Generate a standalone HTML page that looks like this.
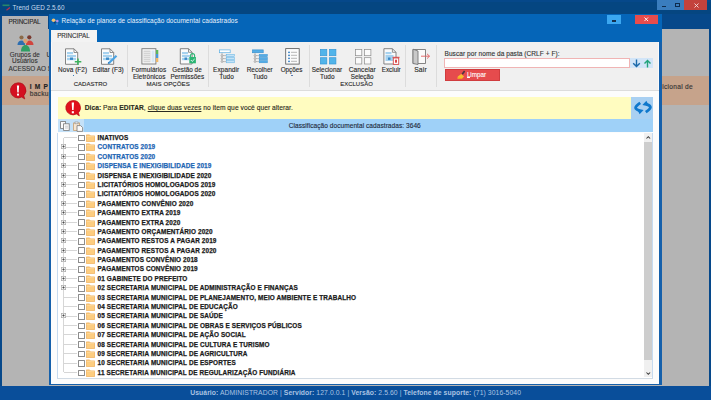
<!DOCTYPE html>
<html><head><meta charset="utf-8">
<style>
*{box-sizing:border-box;margin:0;padding:0}
html,body{width:711px;height:400px;overflow:hidden}
body{position:relative;background:#06498b;font-family:"Liberation Sans",sans-serif;font-size:6px;color:#333}
.a{position:absolute;white-space:nowrap}
svg.a{overflow:visible}
.t{position:absolute;white-space:nowrap;line-height:8px;-webkit-text-stroke:0.12px currentColor}
.hl{position:absolute;left:64px;width:13px;height:1px;background:#d6d6d6}
.pb{position:absolute;left:61px}
.cb{position:absolute;left:78px;width:6.8px;height:6.6px;border:1px solid #8c8c8c;border-radius:0.6px;background:#fff}
.fd{position:absolute;left:86.3px}
.tt{position:absolute;left:97.6px;height:9.388px;line-height:9.388px;font-size:6.4px;letter-spacing:0.13px;-webkit-text-stroke:0.25px currentColor;font-weight:bold;white-space:nowrap;color:#1c1c1c}
.tt.b{color:#1e66b4}
</style></head><body>
<div class="a" style="left:0;top:0;width:711px;height:400px;background:#06488a"></div>
<div class="a" style="left:0;top:1.5px;width:711px;height:12.5px;background:#054681"></div>
<div class="a" style="left:0;top:385.5px;width:711px;height:14.5px;background:#094e9a"></div>
<svg class="a" style="left:1px;top:3px" width="10" height="9" viewBox="0 0 10 9"><path d="M1.5 2.3h7" stroke="#28876a" stroke-width="1.6"/><path d="M5.5 7.2L9 4.6" stroke="#b83050" stroke-width="1.3"/></svg>
<div class="t" style="left:12.60px;top:3.60px;font-size:6.33px;color:#c8dcf0;letter-spacing:0.048px;-webkit-text-stroke:0">Trend GED 2.5.60</div>
<div class="a" style="left:657px;top:0;width:27px;height:10px;background:#3a7dbe"></div>
<div class="a" style="left:661.6px;top:5.8px;width:4.3px;height:1.2px;background:#0d2c4e"></div>
<div class="a" style="left:675.3px;top:3.2px;width:5px;height:4.2px;border:1px solid #0d2c4e;border-top-width:1.5px"></div>
<div class="a" style="left:684px;top:0;width:23px;height:10px;background:#c3423c"></div>
<svg class="a" style="left:693.5px;top:3px" width="5" height="5" viewBox="0 0 5 5"><path d="M0.5 0.5L4.5 4.5M4.5 0.5L0.5 4.5" stroke="#f4dcdc" stroke-width="0.9"/></svg>
<div class="a" style="left:2px;top:15.8px;width:46px;height:14px;background:#b4b4b4"></div>
<div class="t" style="left:8.40px;top:18.20px;font-size:6.3px;color:#2a2a2a;letter-spacing:-0.083px;">PRINCIPAL</div>
<div class="a" style="left:2px;top:28.8px;width:706.5px;height:356.9px;background:#b4b4b4"></div>
<svg class="a" style="left:17px;top:33.5px" width="17" height="18" viewBox="0 0 17 18">
<circle cx="4.5" cy="3.5" r="2.1" fill="#8b6a48"/><path d="M0.5 11c0-3 1.8-4.6 4-4.6s3.5 1.5 3.5 4.6z" fill="#2d6eb0"/>
<circle cx="12.3" cy="3.3" r="2.1" fill="#7a3a30"/><path d="M9 11c0-3 1.5-4.6 3.5-4.6s4 1.6 4 4.6z" fill="#d0453e"/>
<circle cx="8.5" cy="7" r="2.2" fill="#e0a070"/><path d="M4 17.5c0-4 2-6.4 4.5-6.4s4.5 2.4 4.5 6.4z" fill="#2f9e63"/>
</svg>
<div class="t" style="left:9.80px;top:51.30px;font-size:6.34px;color:#333;letter-spacing:0.052px;">Grupos de</div>
<div class="t" style="left:12.00px;top:57.40px;font-size:6.4px;color:#333;letter-spacing:0.051px;">Usuários</div>
<div class="t" style="left:8.60px;top:65.10px;font-size:6.4px;color:#333;">ACESSO AO S</div>
<div class="t" style="left:46.50px;top:51.30px;font-size:6.6px;color:#333;">U</div>
<div class="a" style="left:2px;top:76.2px;width:706.5px;height:28.5px;background:#c6a38b"></div>
<svg class="a" style="left:8.5px;top:81.5px" width="18" height="18" viewBox="0 0 18 18"><path d="M9 0.8a7.6 7.6 0 1 0 3.6 14.3l3.2 1.9-1-3.3A7.6 7.6 0 0 0 9 0.8z" fill="#d41020" stroke="#a80a14" stroke-width="0.6"/><path d="M7.9 3.5h2.2l-0.4 7h-1.4z" fill="#fff"/><rect x="8" y="11.6" width="2" height="2" fill="#fff"/></svg>
<div class="t" style="left:29.70px;top:83.30px;font-size:6.6px;color:#222;letter-spacing:0.7px"><b>I M P</b></div>
<div class="t" style="left:29.70px;top:89.50px;font-size:6.6px;color:#333;letter-spacing:0.3px">backup</div>
<div class="t" style="left:658.20px;top:83.00px;font-size:6.6px;color:#333;letter-spacing:0.3px">dicional de</div>
<div class="t" style="left:190.20px;top:389.00px;font-size:6.8px;color:#a9c3e3;letter-spacing:0.080px;-webkit-text-stroke:0"><b>Usuário:</b> ADMINISTRADOR | <b>Servidor:</b> 127.0.0.1 | <b>Versão:</b> 2.5.60 | <b>Telefone de suporte:</b> (71) 3016-5040</div>
<div class="a" style="left:48.5px;top:13.7px;width:613.5px;height:371.8px;background:#1560ab"></div>
<div class="a" style="left:48.8px;top:13.7px;width:612.8px;height:28.5px;background:#0565b8"></div>
<svg class="a" style="left:51px;top:17.5px" width="9" height="8" viewBox="0 0 9 8"><ellipse cx="2.6" cy="2.3" rx="1.9" ry="1.7" fill="#f2c272"/><circle cx="6.3" cy="3.1" r="1.3" fill="#b090e8"/><circle cx="3.8" cy="4.6" r="0.9" fill="#1a3a6a"/><circle cx="6" cy="6" r="0.7" fill="#60b0f0"/></svg>
<div class="t" style="left:61.60px;top:16.70px;font-size:6.48px;color:#e8f2fc;letter-spacing:0.050px;-webkit-text-stroke:0">Relação de planos de classificação documental cadastrados</div>
<div class="a" style="left:607.3px;top:14.6px;width:13.7px;height:9.8px;background:#3ba7f0"></div>
<div class="a" style="left:612.2px;top:20.2px;width:4px;height:1.4px;background:#13304f"></div>
<div class="a" style="left:634.5px;top:14.6px;width:23.5px;height:9.8px;background:#e84c4c"></div>
<svg class="a" style="left:644.3px;top:17.4px" width="4.5" height="4.5" viewBox="0 0 5 5"><path d="M0.5 0.5L4.5 4.5M4.5 0.5L0.5 4.5" stroke="#fff" stroke-width="1"/></svg>
<div class="a" style="left:51.2px;top:30px;width:46.2px;height:13px;background:#f3f3f3"></div>
<div class="t" style="left:57.20px;top:32.20px;font-size:6.3px;color:#333;letter-spacing:-0.033px;">PRINCIPAL</div>
<div class="a" style="left:51.2px;top:42.2px;width:608.3px;height:48.3px;background:#f0f0f0"></div>
<div class="a" style="left:51.2px;top:90px;width:608.3px;height:1.3px;background:#dcdcdc"></div>
<div class="a" style="left:51.2px;top:42.2px;width:1.2px;height:48px;background:#fafafa"></div>
<div class="a" style="left:658.2px;top:42.2px;width:1.3px;height:48px;background:#fafafa"></div>
<div class="a" style="left:127.4px;top:45px;width:0.8px;height:42px;background:#dcdcdc"></div>
<div class="a" style="left:208.0px;top:45px;width:0.8px;height:42px;background:#dcdcdc"></div>
<div class="a" style="left:308.5px;top:45px;width:0.8px;height:42px;background:#dcdcdc"></div>
<div class="a" style="left:404.7px;top:45px;width:0.8px;height:42px;background:#dcdcdc"></div>
<div class="a" style="left:436.4px;top:45px;width:0.8px;height:42px;background:#dcdcdc"></div>
<div class="a" style="left:51.2px;top:91.3px;width:608.3px;height:292.4px;background:#fcfcfc"></div>
<svg class="a" style="left:64px;top:48px" width="18" height="18" viewBox="0 0 18 18"><path d="M1.5 0.8h8.5l3.7 3.7v11.8H1.5z" fill="#fbfbfb" stroke="#777" stroke-width="0.9"/><path d="M10 0.8v3.7h3.7" fill="none" stroke="#777" stroke-width="0.8"/>
<rect x="3" y="4" width="6" height="2.2" fill="#a6d2ef"/><rect x="3" y="7" width="9" height="2.2" fill="#a6d2ef"/><rect x="3" y="10" width="9" height="2.2" fill="#a6d2ef"/>
<rect x="6" y="9.5" width="3" height="2.4" fill="#3a8ac8"/>
<path d="M14 10.5v6.5M10.8 13.7h6.5" stroke="#3cb25c" stroke-width="1.5"/></svg>
<div class="t" style="left:58.10px;top:65.80px;font-size:6.44px;color:#282828;letter-spacing:0.050px;">Nova (F2)</div>
<div class="a" style="left:72.6px;top:74.6px;width:1.6px;height:1.3px;background:#3a7ab8"></div>
<div class="t" style="left:73.70px;top:79.60px;font-size:5.98px;color:#282828;letter-spacing:0.047px;">CADASTRO</div>
<svg class="a" style="left:100px;top:48px" width="18" height="18" viewBox="0 0 18 18"><path d="M1.5 0.8h8.5l3.7 3.7v11.8H1.5z" fill="#fbfbfb" stroke="#777" stroke-width="0.9"/><path d="M10 0.8v3.7h3.7" fill="none" stroke="#777" stroke-width="0.8"/>
<rect x="3" y="4" width="6" height="2.2" fill="#a6d2ef"/><rect x="3" y="7" width="9" height="2.2" fill="#a6d2ef"/><rect x="3" y="10" width="9" height="2.2" fill="#a6d2ef"/>
<rect x="6" y="9.5" width="3" height="2.4" fill="#3a8ac8"/>
<path d="M8.5 15.5L16.5 7.8" stroke="#4aa3e3" stroke-width="2.2"/><path d="M8.2 16l0.6-2" stroke="#2a70b0" stroke-width="0.8"/></svg>
<div class="t" style="left:92.70px;top:65.80px;font-size:6.46px;color:#282828;letter-spacing:0.050px;">Editar (F3)</div>
<svg class="a" style="left:140.5px;top:48.4px" width="18" height="17" viewBox="0 0 18 17">
<rect x="0.9" y="0.7" width="14" height="15.3" fill="#fafafa" stroke="#777" stroke-width="0.9"/>
<rect x="2.5" y="2.5" width="7" height="11.8" fill="#d4d4d4"/><path d="M2.5 4.5h7M2.5 6.5h7M2.5 8.5h7M2.5 10.5h7M2.5 12.5h7" stroke="#f4f4f4" stroke-width="0.6"/>
<rect x="10.5" y="2.5" width="3" height="11.8" fill="#d8e8f4"/>
<rect x="15" y="2" width="2.3" height="4" fill="#5cb85c"/><rect x="15" y="6" width="2.3" height="4" fill="#4a9ad8"/><rect x="15" y="10" width="2.3" height="4" fill="#efb868"/></svg>
<div class="t" style="left:131.50px;top:65.80px;font-size:6.48px;color:#282828;letter-spacing:0.052px;">Formulários</div>
<div class="t" style="left:133.02px;top:72.60px;font-size:6.45px;color:#282828;letter-spacing:0.050px;">Eletrônicos</div>
<div class="t" style="left:146.50px;top:79.80px;font-size:6.11px;color:#282828;letter-spacing:0.050px;">MAIS OPÇÕES</div>
<svg class="a" style="left:178.5px;top:48.4px" width="18" height="17" viewBox="0 0 18 17">
<path d="M1.3 0.7h8.2l3.6 3.6v11.7H1.3z" fill="#fbfbfb" stroke="#777" stroke-width="0.9"/><path d="M9.5 0.7v3.6h3.6" fill="none" stroke="#777" stroke-width="0.8"/>
<rect x="3" y="4" width="6" height="2.2" fill="#a6d2ef"/><rect x="3" y="7" width="8" height="2.2" fill="#a6d2ef"/><rect x="3" y="10" width="7" height="2.2" fill="#a6d2ef"/>
<rect x="5.5" y="9.5" width="2.5" height="2.4" fill="#3a8ac8"/>
<path d="M11.6 9.2v-1.6a2 2 0 0 1 4 0v1.6" fill="none" stroke="#2bb573" stroke-width="1.1"/>
<rect x="10.3" y="9" width="6.6" height="6.3" fill="#2bb573"/><path d="M11.8 12l1.4 1.4 2.4-2.4" fill="none" stroke="#fff" stroke-width="0.9"/></svg>
<div class="t" style="left:172.20px;top:65.80px;font-size:6.31px;color:#282828;letter-spacing:0.050px;">Gestão de</div>
<div class="t" style="left:170.40px;top:72.60px;font-size:6.39px;color:#282828;letter-spacing:0.049px;">Permissões</div>
<svg class="a" style="left:218.5px;top:48.6px" width="16" height="16" viewBox="0 0 16 16">
<rect x="0.6" y="0.9" width="10.6" height="2.8" fill="#ffffff" stroke="#5cb0e4" stroke-width="0.7"/>
<path d="M3 3.7v9" stroke="#888" stroke-width="0.5"/>
<circle cx="3" cy="6.6" r="0.9" fill="#fafafa" stroke="#777" stroke-width="0.5"/><circle cx="3" cy="9.6" r="0.9" fill="#fafafa" stroke="#777" stroke-width="0.5"/><circle cx="3" cy="12.6" r="0.9" fill="#fafafa" stroke="#777" stroke-width="0.5"/>
<path d="M3.9 6.6h3.3M3.9 9.6h3.3M3.9 12.6h3.3" stroke="#888" stroke-width="0.5"/>
<rect x="7.2" y="5.4" width="8.2" height="2.3" fill="#c4e3f7" stroke="#5cb0e4" stroke-width="0.5"/>
<rect x="7.2" y="8.45" width="8.2" height="2.3" fill="#c4e3f7" stroke="#5cb0e4" stroke-width="0.5"/>
<rect x="7.2" y="11.5" width="8.2" height="2.3" fill="#c4e3f7" stroke="#5cb0e4" stroke-width="0.5"/></svg>
<div class="t" style="left:213.10px;top:65.80px;font-size:6.53px;color:#282828;letter-spacing:0.049px;">Expandir</div>
<div class="t" style="left:219.21px;top:72.60px;font-size:6.45px;color:#282828;letter-spacing:0.050px;">Tudo</div>
<svg class="a" style="left:252.3px;top:48.6px" width="16" height="16" viewBox="0 0 16 16">
<rect x="0.6" y="0.9" width="10.6" height="2.8" fill="#53ace6" stroke="#3a92d0" stroke-width="0.7"/>
<path d="M3 3.7v9" stroke="#888" stroke-width="0.5"/>
<circle cx="3" cy="6.6" r="0.9" fill="#fafafa" stroke="#777" stroke-width="0.5"/><circle cx="3" cy="9.6" r="0.9" fill="#fafafa" stroke="#777" stroke-width="0.5"/><circle cx="3" cy="12.6" r="0.9" fill="#fafafa" stroke="#777" stroke-width="0.5"/>
<path d="M3.9 6.6h3.3M3.9 9.6h3.3M3.9 12.6h3.3" stroke="#888" stroke-width="0.5"/>
<rect x="7.2" y="5.4" width="8.2" height="2.3" fill="#53ace6" stroke="#3a92d0" stroke-width="0.5"/>
<rect x="7.2" y="8.45" width="8.2" height="2.3" fill="#53ace6" stroke="#3a92d0" stroke-width="0.5"/>
<rect x="7.2" y="11.5" width="8.2" height="2.3" fill="#53ace6" stroke="#3a92d0" stroke-width="0.5"/></svg>
<div class="t" style="left:246.70px;top:65.80px;font-size:6.41px;color:#282828;letter-spacing:0.053px;">Recolher</div>
<div class="t" style="left:252.71px;top:72.60px;font-size:6.45px;color:#282828;letter-spacing:0.050px;">Tudo</div>
<svg class="a" style="left:284.5px;top:48.4px" width="15" height="17" viewBox="0 0 15 17">
<rect x="0.7" y="0.6" width="13.5" height="15.5" fill="#fbfbfb" stroke="#5e5e5e" stroke-width="0.85"/>
<circle cx="4" cy="4.3" r="0.9" fill="#2a78c0"/><circle cx="4" cy="7.3" r="0.9" fill="#2a78c0"/><circle cx="4" cy="10.3" r="0.9" fill="#2a78c0"/><circle cx="4" cy="13.3" r="0.9" fill="#2a78c0"/>
<path d="M6 4.3h6M6 7.3h6M6 10.3h6M6 13.3h6" stroke="#888" stroke-width="0.6"/></svg>
<div class="t" style="left:280.70px;top:65.80px;font-size:6.3px;color:#282828;letter-spacing:-0.000px;">Opções</div>
<div class="a" style="left:291.3px;top:74.9px;width:1.5px;height:1.2px;background:#5a7ab0"></div>
<svg class="a" style="left:319.6px;top:48.6px" width="17" height="16" viewBox="0 0 17 16"><rect x="0.4" y="0.4" width="6.4" height="6.3" fill="#51b4ea" stroke="#3798d6" stroke-width="0.7"/><rect x="9.5" y="0.4" width="6.4" height="6.3" fill="#51b4ea" stroke="#3798d6" stroke-width="0.7"/><rect x="0.4" y="8.7" width="6.4" height="6.3" fill="#51b4ea" stroke="#3798d6" stroke-width="0.7"/><rect x="9.5" y="8.7" width="6.4" height="6.3" fill="#51b4ea" stroke="#3798d6" stroke-width="0.7"/></svg>
<div class="t" style="left:311.70px;top:65.80px;font-size:6.39px;color:#282828;letter-spacing:0.048px;">Selecionar</div>
<div class="t" style="left:320.01px;top:72.60px;font-size:6.45px;color:#282828;letter-spacing:0.050px;">Tudo</div>
<svg class="a" style="left:354.6px;top:48.6px" width="17" height="16" viewBox="0 0 17 16"><rect x="0.4" y="0.4" width="6.4" height="6.3" fill="#fbfbfb" stroke="#8c8c8c" stroke-width="0.7"/><rect x="9.5" y="0.4" width="6.4" height="6.3" fill="#fbfbfb" stroke="#8c8c8c" stroke-width="0.7"/><rect x="0.4" y="8.7" width="6.4" height="6.3" fill="#fbfbfb" stroke="#8c8c8c" stroke-width="0.7"/><rect x="9.5" y="8.7" width="6.4" height="6.3" fill="#fbfbfb" stroke="#8c8c8c" stroke-width="0.7"/></svg>
<div class="t" style="left:348.70px;top:65.80px;font-size:6.66px;color:#282828;letter-spacing:0.053px;">Cancelar</div>
<div class="t" style="left:350.70px;top:72.60px;font-size:6.3px;color:#282828;letter-spacing:0.007px;">Seleção</div>
<div class="t" style="left:340.30px;top:79.80px;font-size:5.9px;color:#282828;letter-spacing:0.047px;">EXCLUSÃO</div>
<svg class="a" style="left:383px;top:48.4px" width="17" height="17" viewBox="0 0 17 17">
<path d="M0.9 0.7h8.5l3.6 3.6v11.7H0.9z" fill="#fbfbfb" stroke="#777" stroke-width="0.9"/><path d="M9.4 0.7v3.6h3.6" fill="none" stroke="#777" stroke-width="0.8"/>
<rect x="2.5" y="4" width="6" height="2.2" fill="#a6d2ef"/><rect x="2.5" y="7" width="8" height="6" fill="#a6d2ef"/>
<rect x="5" y="9.5" width="2.5" height="2.4" fill="#3a8ac8"/>
<path d="M9.5 9.3h7" stroke="#d84848" stroke-width="1"/><rect x="10.3" y="10" width="5.4" height="6.4" fill="#fff" stroke="#d84848" stroke-width="0.9"/><rect x="12" y="11.7" width="2" height="3" fill="#d84848"/></svg>
<div class="t" style="left:381.70px;top:65.80px;font-size:6.3px;color:#282828;letter-spacing:0.017px;">Excluir</div>
<svg class="a" style="left:411.5px;top:48.4px" width="19" height="17" viewBox="0 0 19 17">
<path d="M1 1.5h12.5v14H1z" fill="#fafafa" stroke="#777" stroke-width="0.9"/>
<path d="M1 1.2L6 3v13.5L1 15.5z" fill="#c9c9c9" stroke="#777" stroke-width="0.9"/>
<path d="M9 8.2h8.5M15 5.8l2.5 2.4-2.5 2.4" fill="none" stroke="#e26060" stroke-width="0.9"/></svg>
<div class="t" style="left:414.20px;top:65.80px;font-size:6.8px;color:#282828;letter-spacing:0.137px;">Sair</div>
<div class="t" style="left:444.50px;top:49.80px;font-size:6.55px;color:#333;letter-spacing:0.049px;">Buscar por nome da pasta (CRLF + F):</div>
<div class="a" style="left:444.4px;top:57.6px;width:185.6px;height:10.4px;background:#fff;border:1px solid #f0b4b4"></div>
<div class="a" style="left:630.3px;top:57.7px;width:11.3px;height:9.9px;background:#d2e5f8"></div>
<div class="a" style="left:641.8px;top:57.7px;width:11px;height:9.9px;background:#d2e5f8"></div>
<svg class="a" style="left:631.5px;top:58.5px" width="9" height="9" viewBox="0 0 9 9"><path d="M4.5 0.5v7M1.2 4.3l3.3 3.3 3.3-3.3" fill="none" stroke="#1c6aaa" stroke-width="1.4"/></svg>
<svg class="a" style="left:642.5px;top:58.8px" width="9" height="9" viewBox="0 0 9 9"><path d="M4.5 8.5v-7M1.5 4.5l3-3 3 3" fill="none" stroke="#22a37a" stroke-width="1.4"/></svg>
<div class="a" style="left:444.6px;top:69px;width:55.4px;height:12px;background:#e64b4d;border:0.6px solid #d03c3e"></div>
<svg class="a" style="left:456px;top:70px" width="10" height="10" viewBox="0 0 10 10"><path d="M8.6 1L6.2 4.2" stroke="#4e3440" stroke-width="1.7"/><path d="M1.8 6.6L5.2 3.9L8.1 6.5L5.9 8.8Q3.2 9.4 1.4 8.5z" fill="#f8bc2e"/><path d="M1.6 8.4Q3.6 9.2 5.9 8.7L6.8 7.8Q4 8.4 2 7.6z" fill="#f09a20"/></svg>
<div class="t" style="left:466.90px;top:71.40px;font-size:6.3px;color:#fff;letter-spacing:-0.028px;-webkit-text-stroke:0.1px #fff">Limpar</div>
<div class="a" style="left:467.4px;top:77.3px;width:3px;height:0.7px;background:#fff"></div>
<div class="a" style="left:57.7px;top:97.3px;width:573.5px;height:21.5px;background:#fffcc0"></div>
<div class="a" style="left:631.2px;top:97.3px;width:21.4px;height:21.5px;background:#a9d0f2"></div>
<svg class="a" style="left:633px;top:100px" width="19" height="16" viewBox="0 0 19 16">
<path d="M7.2 2.9Q2.6 6.2 2.6 7.8T6.3 10.6" fill="none" stroke="#0f78cc" stroke-width="2.8" stroke-linejoin="round"/><path d="M3.8 8.4L10.6 9.9 6.6 14.2z" fill="#0f78cc"/>
<path d="M12.8 12.1Q17.4 8.8 17.4 7.2T13.7 4.4" fill="none" stroke="#0f78cc" stroke-width="2.8" stroke-linejoin="round"/><path d="M16.2 6.6L9.4 5.1 13.4 0.8z" fill="#0f78cc"/></svg>
<svg class="a" style="left:64.5px;top:99.8px" width="17" height="17" viewBox="0 0 17 17"><path d="M7.8 0.5a7.2 7.2 0 1 0 3.6 13.5l3 1.9-0.9-3.2A7.2 7.2 0 0 0 7.8 0.5z" fill="#e0101c" stroke="#b20a12" stroke-width="0.6"/><path d="M6.7 2.5h2.3l-0.4 7.6h-1.5z" fill="#fff"/><rect x="6.8" y="11.2" width="2.1" height="2.1" fill="#fff"/></svg>
<div class="t" style="left:84.70px;top:104.00px;font-size:6.66px;color:#2a2a20;letter-spacing:0.049px;"><b>Dica:</b> Para <b>EDITAR</b>, <u>clique duas vezes</u> no item que você quer alterar.</div>
<div class="a" style="left:57.7px;top:118.6px;width:594.9px;height:13.9px;background:#9fd1f8"></div>
<div class="a" style="left:57.7px;top:119.2px;width:26.3px;height:13.3px;background:#c4e1f8"></div>
<svg class="a" style="left:59.5px;top:120.8px" width="11" height="10" viewBox="0 0 11 10"><rect x="0.6" y="0.6" width="5" height="6.8" fill="#fafafa" stroke="#777" stroke-width="0.8"/><rect x="3.6" y="2.8" width="5.6" height="6.6" fill="#fafafa" stroke="#777" stroke-width="0.8"/><path d="M5 5.2h3M5 7h3" stroke="#999" stroke-width="0.5"/></svg>
<svg class="a" style="left:72.5px;top:120.5px" width="11" height="11" viewBox="0 0 11 11"><rect x="0.6" y="2" width="6" height="7.5" fill="#f6e6d2" stroke="#c8a070" stroke-width="0.8"/><rect x="2" y="1" width="3" height="1.8" fill="#fff" stroke="#888" stroke-width="0.6"/><path d="M4 4.6h3.6l2 2v3.8H4z" fill="#fafafa" stroke="#777" stroke-width="0.8"/></svg>
<div class="t" style="left:288.70px;top:122.20px;font-size:6.56px;color:#1e2a3a;letter-spacing:0.052px;">Classificação documental cadastradas: 3646</div>
<div class="a" style="left:57px;top:132.5px;width:595.5px;height:246.3px;background:#fff;border:1.8px solid #c6daef;border-top:none;border-right-width:1px;border-bottom:1.7px solid #d2dbe4"></div>
<div class="a" style="left:644px;top:132.5px;width:7.8px;height:244.5px;background:#f0f0f0"></div>
<div class="a" style="left:644px;top:142px;width:7.8px;height:217.5px;background:#cdcdcd"></div>
<svg class="a" style="left:645.7px;top:135.9px" width="4.6" height="3" viewBox="0 0 5 3"><path d="M0.5 2.6L2.5 0.6 4.5 2.6" fill="none" stroke="#3a3a3a" stroke-width="1.1"/></svg>
<svg class="a" style="left:645.7px;top:371.6px" width="4.6" height="3" viewBox="0 0 5 3"><path d="M0.5 0.4L2.5 2.4 4.5 0.4" fill="none" stroke="#3a3a3a" stroke-width="1.1"/></svg>
<div class="a" style="left:63px;top:137.70px;width:1px;height:234.70px;background:#d6d6d6"></div>
<div class="hl" style="top:137.20px"></div>
<div class="cb" style="top:134.80px"></div>
<svg class="fd" style="top:134.10px" width="9" height="8" viewBox="0 0 9 8"><path d="M0.4 7.6V0.9h3.2l1 1h4v5.7z" fill="#fdcd80" stroke="#eeab52" stroke-width="0.7"/><path d="M0.6 2.4h7.8" stroke="#fde0a8" stroke-width="0.6"/></svg>
<div class="tt" style="top:133.01px">INATIVOS</div>
<div class="hl" style="top:146.59px"></div>
<svg class="pb" style="top:144.49px" width="5" height="5" viewBox="0 0 5 5"><rect x="0.35" y="0.35" width="4.3" height="4.3" fill="#f6f6f6" stroke="#a8a8a8" stroke-width="0.7"/><path d="M1.3 2.5h2.4M2.5 1.3v2.4" stroke="#333" stroke-width="0.65"/></svg>
<div class="cb" style="top:144.19px"></div>
<svg class="fd" style="top:143.49px" width="9" height="8" viewBox="0 0 9 8"><path d="M0.4 7.6V0.9h3.2l1 1h4v5.7z" fill="#fdcd80" stroke="#eeab52" stroke-width="0.7"/><path d="M0.6 2.4h7.8" stroke="#fde0a8" stroke-width="0.6"/></svg>
<div class="tt b" style="top:142.39px">CONTRATOS 2019</div>
<div class="hl" style="top:155.98px"></div>
<svg class="pb" style="top:153.88px" width="5" height="5" viewBox="0 0 5 5"><rect x="0.35" y="0.35" width="4.3" height="4.3" fill="#f6f6f6" stroke="#a8a8a8" stroke-width="0.7"/><path d="M1.3 2.5h2.4M2.5 1.3v2.4" stroke="#333" stroke-width="0.65"/></svg>
<div class="cb" style="top:153.58px"></div>
<svg class="fd" style="top:152.88px" width="9" height="8" viewBox="0 0 9 8"><path d="M0.4 7.6V0.9h3.2l1 1h4v5.7z" fill="#fdcd80" stroke="#eeab52" stroke-width="0.7"/><path d="M0.6 2.4h7.8" stroke="#fde0a8" stroke-width="0.6"/></svg>
<div class="tt b" style="top:151.78px">CONTRATOS 2020</div>
<div class="hl" style="top:165.36px"></div>
<svg class="pb" style="top:163.26px" width="5" height="5" viewBox="0 0 5 5"><rect x="0.35" y="0.35" width="4.3" height="4.3" fill="#f6f6f6" stroke="#a8a8a8" stroke-width="0.7"/><path d="M1.3 2.5h2.4M2.5 1.3v2.4" stroke="#333" stroke-width="0.65"/></svg>
<div class="cb" style="top:162.96px"></div>
<svg class="fd" style="top:162.26px" width="9" height="8" viewBox="0 0 9 8"><path d="M0.4 7.6V0.9h3.2l1 1h4v5.7z" fill="#fdcd80" stroke="#eeab52" stroke-width="0.7"/><path d="M0.6 2.4h7.8" stroke="#fde0a8" stroke-width="0.6"/></svg>
<div class="tt b" style="top:161.17px">DISPENSA E INEXIGIBILIDADE 2019</div>
<div class="hl" style="top:174.75px"></div>
<svg class="pb" style="top:172.65px" width="5" height="5" viewBox="0 0 5 5"><rect x="0.35" y="0.35" width="4.3" height="4.3" fill="#f6f6f6" stroke="#a8a8a8" stroke-width="0.7"/><path d="M1.3 2.5h2.4M2.5 1.3v2.4" stroke="#333" stroke-width="0.65"/></svg>
<div class="cb" style="top:172.35px"></div>
<svg class="fd" style="top:171.65px" width="9" height="8" viewBox="0 0 9 8"><path d="M0.4 7.6V0.9h3.2l1 1h4v5.7z" fill="#fdcd80" stroke="#eeab52" stroke-width="0.7"/><path d="M0.6 2.4h7.8" stroke="#fde0a8" stroke-width="0.6"/></svg>
<div class="tt" style="top:170.56px">DISPENSA E INEXIGIBILIDADE 2020</div>
<div class="hl" style="top:184.14px"></div>
<svg class="pb" style="top:182.04px" width="5" height="5" viewBox="0 0 5 5"><rect x="0.35" y="0.35" width="4.3" height="4.3" fill="#f6f6f6" stroke="#a8a8a8" stroke-width="0.7"/><path d="M1.3 2.5h2.4M2.5 1.3v2.4" stroke="#333" stroke-width="0.65"/></svg>
<div class="cb" style="top:181.74px"></div>
<svg class="fd" style="top:181.04px" width="9" height="8" viewBox="0 0 9 8"><path d="M0.4 7.6V0.9h3.2l1 1h4v5.7z" fill="#fdcd80" stroke="#eeab52" stroke-width="0.7"/><path d="M0.6 2.4h7.8" stroke="#fde0a8" stroke-width="0.6"/></svg>
<div class="tt" style="top:179.95px">LICITATÓRIOS HOMOLOGADOS 2019</div>
<div class="hl" style="top:193.53px"></div>
<svg class="pb" style="top:191.43px" width="5" height="5" viewBox="0 0 5 5"><rect x="0.35" y="0.35" width="4.3" height="4.3" fill="#f6f6f6" stroke="#a8a8a8" stroke-width="0.7"/><path d="M1.3 2.5h2.4M2.5 1.3v2.4" stroke="#333" stroke-width="0.65"/></svg>
<div class="cb" style="top:191.13px"></div>
<svg class="fd" style="top:190.43px" width="9" height="8" viewBox="0 0 9 8"><path d="M0.4 7.6V0.9h3.2l1 1h4v5.7z" fill="#fdcd80" stroke="#eeab52" stroke-width="0.7"/><path d="M0.6 2.4h7.8" stroke="#fde0a8" stroke-width="0.6"/></svg>
<div class="tt" style="top:189.33px">LICITATÓRIOS HOMOLOGADOS 2020</div>
<div class="hl" style="top:202.92px"></div>
<svg class="pb" style="top:200.82px" width="5" height="5" viewBox="0 0 5 5"><rect x="0.35" y="0.35" width="4.3" height="4.3" fill="#f6f6f6" stroke="#a8a8a8" stroke-width="0.7"/><path d="M1.3 2.5h2.4M2.5 1.3v2.4" stroke="#333" stroke-width="0.65"/></svg>
<div class="cb" style="top:200.52px"></div>
<svg class="fd" style="top:199.82px" width="9" height="8" viewBox="0 0 9 8"><path d="M0.4 7.6V0.9h3.2l1 1h4v5.7z" fill="#fdcd80" stroke="#eeab52" stroke-width="0.7"/><path d="M0.6 2.4h7.8" stroke="#fde0a8" stroke-width="0.6"/></svg>
<div class="tt" style="top:198.72px">PAGAMENTO CONVÊNIO 2020</div>
<div class="hl" style="top:212.30px"></div>
<svg class="pb" style="top:210.20px" width="5" height="5" viewBox="0 0 5 5"><rect x="0.35" y="0.35" width="4.3" height="4.3" fill="#f6f6f6" stroke="#a8a8a8" stroke-width="0.7"/><path d="M1.3 2.5h2.4M2.5 1.3v2.4" stroke="#333" stroke-width="0.65"/></svg>
<div class="cb" style="top:209.90px"></div>
<svg class="fd" style="top:209.20px" width="9" height="8" viewBox="0 0 9 8"><path d="M0.4 7.6V0.9h3.2l1 1h4v5.7z" fill="#fdcd80" stroke="#eeab52" stroke-width="0.7"/><path d="M0.6 2.4h7.8" stroke="#fde0a8" stroke-width="0.6"/></svg>
<div class="tt" style="top:208.11px">PAGAMENTO EXTRA 2019</div>
<div class="hl" style="top:221.69px"></div>
<svg class="pb" style="top:219.59px" width="5" height="5" viewBox="0 0 5 5"><rect x="0.35" y="0.35" width="4.3" height="4.3" fill="#f6f6f6" stroke="#a8a8a8" stroke-width="0.7"/><path d="M1.3 2.5h2.4M2.5 1.3v2.4" stroke="#333" stroke-width="0.65"/></svg>
<div class="cb" style="top:219.29px"></div>
<svg class="fd" style="top:218.59px" width="9" height="8" viewBox="0 0 9 8"><path d="M0.4 7.6V0.9h3.2l1 1h4v5.7z" fill="#fdcd80" stroke="#eeab52" stroke-width="0.7"/><path d="M0.6 2.4h7.8" stroke="#fde0a8" stroke-width="0.6"/></svg>
<div class="tt" style="top:217.50px">PAGAMENTO EXTRA 2020</div>
<div class="hl" style="top:231.08px"></div>
<svg class="pb" style="top:228.98px" width="5" height="5" viewBox="0 0 5 5"><rect x="0.35" y="0.35" width="4.3" height="4.3" fill="#f6f6f6" stroke="#a8a8a8" stroke-width="0.7"/><path d="M1.3 2.5h2.4M2.5 1.3v2.4" stroke="#333" stroke-width="0.65"/></svg>
<div class="cb" style="top:228.68px"></div>
<svg class="fd" style="top:227.98px" width="9" height="8" viewBox="0 0 9 8"><path d="M0.4 7.6V0.9h3.2l1 1h4v5.7z" fill="#fdcd80" stroke="#eeab52" stroke-width="0.7"/><path d="M0.6 2.4h7.8" stroke="#fde0a8" stroke-width="0.6"/></svg>
<div class="tt" style="top:226.89px">PAGAMENTO ORÇAMENTÁRIO 2020</div>
<div class="hl" style="top:240.47px"></div>
<svg class="pb" style="top:238.37px" width="5" height="5" viewBox="0 0 5 5"><rect x="0.35" y="0.35" width="4.3" height="4.3" fill="#f6f6f6" stroke="#a8a8a8" stroke-width="0.7"/><path d="M1.3 2.5h2.4M2.5 1.3v2.4" stroke="#333" stroke-width="0.65"/></svg>
<div class="cb" style="top:238.07px"></div>
<svg class="fd" style="top:237.37px" width="9" height="8" viewBox="0 0 9 8"><path d="M0.4 7.6V0.9h3.2l1 1h4v5.7z" fill="#fdcd80" stroke="#eeab52" stroke-width="0.7"/><path d="M0.6 2.4h7.8" stroke="#fde0a8" stroke-width="0.6"/></svg>
<div class="tt" style="top:236.27px">PAGAMENTO RESTOS A PAGAR 2019</div>
<div class="hl" style="top:249.86px"></div>
<svg class="pb" style="top:247.76px" width="5" height="5" viewBox="0 0 5 5"><rect x="0.35" y="0.35" width="4.3" height="4.3" fill="#f6f6f6" stroke="#a8a8a8" stroke-width="0.7"/><path d="M1.3 2.5h2.4M2.5 1.3v2.4" stroke="#333" stroke-width="0.65"/></svg>
<div class="cb" style="top:247.46px"></div>
<svg class="fd" style="top:246.76px" width="9" height="8" viewBox="0 0 9 8"><path d="M0.4 7.6V0.9h3.2l1 1h4v5.7z" fill="#fdcd80" stroke="#eeab52" stroke-width="0.7"/><path d="M0.6 2.4h7.8" stroke="#fde0a8" stroke-width="0.6"/></svg>
<div class="tt" style="top:245.66px">PAGAMENTO RESTOS A PAGAR 2020</div>
<div class="hl" style="top:259.24px"></div>
<svg class="pb" style="top:257.14px" width="5" height="5" viewBox="0 0 5 5"><rect x="0.35" y="0.35" width="4.3" height="4.3" fill="#f6f6f6" stroke="#a8a8a8" stroke-width="0.7"/><path d="M1.3 2.5h2.4M2.5 1.3v2.4" stroke="#333" stroke-width="0.65"/></svg>
<div class="cb" style="top:256.84px"></div>
<svg class="fd" style="top:256.14px" width="9" height="8" viewBox="0 0 9 8"><path d="M0.4 7.6V0.9h3.2l1 1h4v5.7z" fill="#fdcd80" stroke="#eeab52" stroke-width="0.7"/><path d="M0.6 2.4h7.8" stroke="#fde0a8" stroke-width="0.6"/></svg>
<div class="tt" style="top:255.05px">PAGAMENTOS CONVÊNIO 2018</div>
<div class="hl" style="top:268.63px"></div>
<svg class="pb" style="top:266.53px" width="5" height="5" viewBox="0 0 5 5"><rect x="0.35" y="0.35" width="4.3" height="4.3" fill="#f6f6f6" stroke="#a8a8a8" stroke-width="0.7"/><path d="M1.3 2.5h2.4M2.5 1.3v2.4" stroke="#333" stroke-width="0.65"/></svg>
<div class="cb" style="top:266.23px"></div>
<svg class="fd" style="top:265.53px" width="9" height="8" viewBox="0 0 9 8"><path d="M0.4 7.6V0.9h3.2l1 1h4v5.7z" fill="#fdcd80" stroke="#eeab52" stroke-width="0.7"/><path d="M0.6 2.4h7.8" stroke="#fde0a8" stroke-width="0.6"/></svg>
<div class="tt" style="top:264.44px">PAGAMENTOS CONVÊNIO 2019</div>
<div class="hl" style="top:278.02px"></div>
<svg class="pb" style="top:275.92px" width="5" height="5" viewBox="0 0 5 5"><rect x="0.35" y="0.35" width="4.3" height="4.3" fill="#f6f6f6" stroke="#a8a8a8" stroke-width="0.7"/><path d="M1.3 2.5h2.4M2.5 1.3v2.4" stroke="#333" stroke-width="0.65"/></svg>
<div class="cb" style="top:275.62px"></div>
<svg class="fd" style="top:274.92px" width="9" height="8" viewBox="0 0 9 8"><path d="M0.4 7.6V0.9h3.2l1 1h4v5.7z" fill="#fdcd80" stroke="#eeab52" stroke-width="0.7"/><path d="M0.6 2.4h7.8" stroke="#fde0a8" stroke-width="0.6"/></svg>
<div class="tt" style="top:273.83px">01 GABINETE DO PREFEITO</div>
<div class="hl" style="top:287.41px"></div>
<svg class="pb" style="top:285.31px" width="5" height="5" viewBox="0 0 5 5"><rect x="0.35" y="0.35" width="4.3" height="4.3" fill="#f6f6f6" stroke="#a8a8a8" stroke-width="0.7"/><path d="M1.3 2.5h2.4M2.5 1.3v2.4" stroke="#333" stroke-width="0.65"/></svg>
<div class="cb" style="top:285.01px"></div>
<svg class="fd" style="top:284.31px" width="9" height="8" viewBox="0 0 9 8"><path d="M0.4 7.6V0.9h3.2l1 1h4v5.7z" fill="#fdcd80" stroke="#eeab52" stroke-width="0.7"/><path d="M0.6 2.4h7.8" stroke="#fde0a8" stroke-width="0.6"/></svg>
<div class="tt" style="top:283.21px">02 SECRETARIA MUNICIPAL DE ADMINISTRAÇÃO E FINANÇAS</div>
<div class="hl" style="top:296.80px"></div>
<div class="cb" style="top:294.40px"></div>
<svg class="fd" style="top:293.70px" width="9" height="8" viewBox="0 0 9 8"><path d="M0.4 7.6V0.9h3.2l1 1h4v5.7z" fill="#fdcd80" stroke="#eeab52" stroke-width="0.7"/><path d="M0.6 2.4h7.8" stroke="#fde0a8" stroke-width="0.6"/></svg>
<div class="tt" style="top:292.60px">03 SECRETARIA MUNICIPAL DE PLANEJAMENTO, MEIO AMBIENTE E TRABALHO</div>
<div class="hl" style="top:306.18px"></div>
<div class="cb" style="top:303.78px"></div>
<svg class="fd" style="top:303.08px" width="9" height="8" viewBox="0 0 9 8"><path d="M0.4 7.6V0.9h3.2l1 1h4v5.7z" fill="#fdcd80" stroke="#eeab52" stroke-width="0.7"/><path d="M0.6 2.4h7.8" stroke="#fde0a8" stroke-width="0.6"/></svg>
<div class="tt" style="top:301.99px">04 SECRETARIA MUNICIPAL DE EDUCAÇÃO</div>
<div class="hl" style="top:315.57px"></div>
<svg class="pb" style="top:313.47px" width="5" height="5" viewBox="0 0 5 5"><rect x="0.35" y="0.35" width="4.3" height="4.3" fill="#f6f6f6" stroke="#a8a8a8" stroke-width="0.7"/><path d="M1.3 2.5h2.4M2.5 1.3v2.4" stroke="#333" stroke-width="0.65"/></svg>
<div class="cb" style="top:313.17px"></div>
<svg class="fd" style="top:312.47px" width="9" height="8" viewBox="0 0 9 8"><path d="M0.4 7.6V0.9h3.2l1 1h4v5.7z" fill="#fdcd80" stroke="#eeab52" stroke-width="0.7"/><path d="M0.6 2.4h7.8" stroke="#fde0a8" stroke-width="0.6"/></svg>
<div class="tt" style="top:311.38px">05 SECRETARIA MUNICIPAL DE SAÚDE</div>
<div class="hl" style="top:324.96px"></div>
<div class="cb" style="top:322.56px"></div>
<svg class="fd" style="top:321.86px" width="9" height="8" viewBox="0 0 9 8"><path d="M0.4 7.6V0.9h3.2l1 1h4v5.7z" fill="#fdcd80" stroke="#eeab52" stroke-width="0.7"/><path d="M0.6 2.4h7.8" stroke="#fde0a8" stroke-width="0.6"/></svg>
<div class="tt" style="top:320.77px">06 SECRETARIA MUNICIPAL DE OBRAS E SERVIÇOS PÚBLICOS</div>
<div class="hl" style="top:334.35px"></div>
<div class="cb" style="top:331.95px"></div>
<svg class="fd" style="top:331.25px" width="9" height="8" viewBox="0 0 9 8"><path d="M0.4 7.6V0.9h3.2l1 1h4v5.7z" fill="#fdcd80" stroke="#eeab52" stroke-width="0.7"/><path d="M0.6 2.4h7.8" stroke="#fde0a8" stroke-width="0.6"/></svg>
<div class="tt" style="top:330.15px">07 SECRETARIA MUNICIPAL DE AÇÃO SOCIAL</div>
<div class="hl" style="top:343.74px"></div>
<div class="cb" style="top:341.34px"></div>
<svg class="fd" style="top:340.64px" width="9" height="8" viewBox="0 0 9 8"><path d="M0.4 7.6V0.9h3.2l1 1h4v5.7z" fill="#fdcd80" stroke="#eeab52" stroke-width="0.7"/><path d="M0.6 2.4h7.8" stroke="#fde0a8" stroke-width="0.6"/></svg>
<div class="tt" style="top:339.54px">08 SECRETARIA MUNICIPAL DE CULTURA E TURISMO</div>
<div class="hl" style="top:353.12px"></div>
<div class="cb" style="top:350.72px"></div>
<svg class="fd" style="top:350.02px" width="9" height="8" viewBox="0 0 9 8"><path d="M0.4 7.6V0.9h3.2l1 1h4v5.7z" fill="#fdcd80" stroke="#eeab52" stroke-width="0.7"/><path d="M0.6 2.4h7.8" stroke="#fde0a8" stroke-width="0.6"/></svg>
<div class="tt" style="top:348.93px">09 SECRETARIA MUNICIPAL DE AGRICULTURA</div>
<div class="hl" style="top:362.51px"></div>
<div class="cb" style="top:360.11px"></div>
<svg class="fd" style="top:359.41px" width="9" height="8" viewBox="0 0 9 8"><path d="M0.4 7.6V0.9h3.2l1 1h4v5.7z" fill="#fdcd80" stroke="#eeab52" stroke-width="0.7"/><path d="M0.6 2.4h7.8" stroke="#fde0a8" stroke-width="0.6"/></svg>
<div class="tt" style="top:358.32px">10 SECRETARIA MUNICIPAL DE ESPORTES</div>
<div class="hl" style="top:371.90px"></div>
<div class="cb" style="top:369.50px"></div>
<svg class="fd" style="top:368.80px" width="9" height="8" viewBox="0 0 9 8"><path d="M0.4 7.6V0.9h3.2l1 1h4v5.7z" fill="#fdcd80" stroke="#eeab52" stroke-width="0.7"/><path d="M0.6 2.4h7.8" stroke="#fde0a8" stroke-width="0.6"/></svg>
<div class="tt" style="top:367.71px">11 SECRETARIA MUNICIPAL DE REGULARIZAÇÃO FUNDIÁRIA</div>
</body></html>
